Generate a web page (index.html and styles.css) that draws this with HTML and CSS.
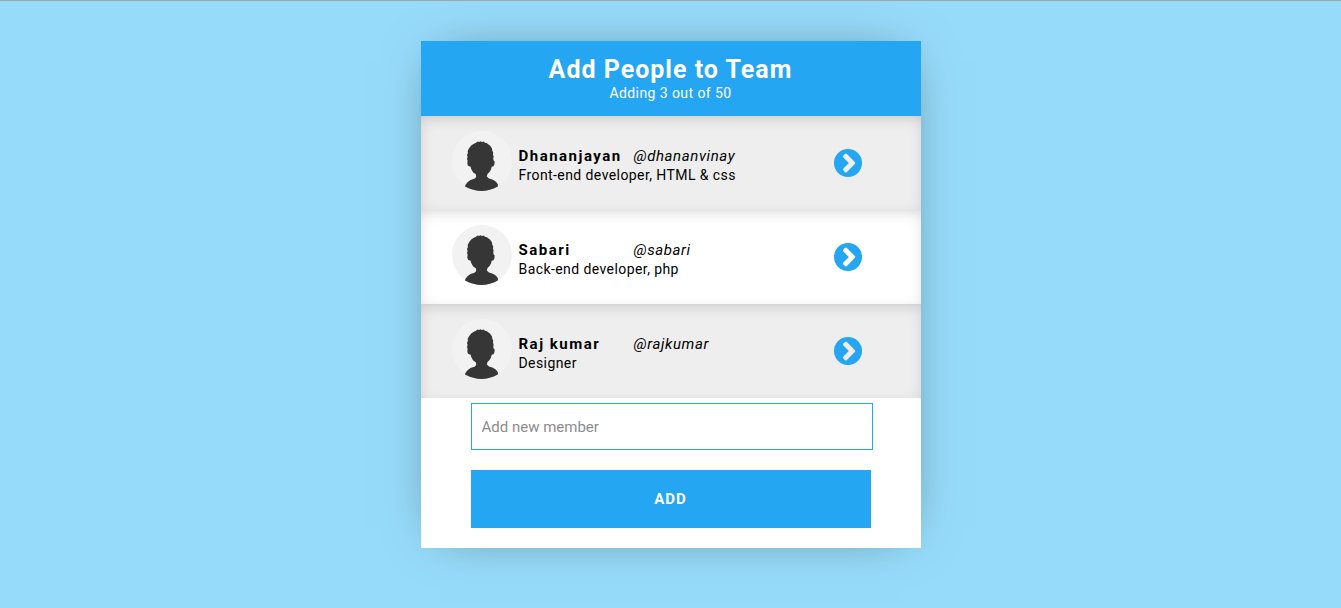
FILE: index.html
```html
<!DOCTYPE html>
<html lang="en">
<head>
<meta charset="utf-8">
<meta name="viewport" content="width=device-width, initial-scale=1">
<title>Add People to Team</title>
<link rel="stylesheet" href="styles.css">
</head>
<body>
<svg class="symbols" aria-hidden="true">
  <symbol id="avatar" viewBox="0 0 60 60">
    <circle cx="30" cy="30" r="30" fill="#f2f2f2"/>
    <path fill="#363636" d="M24 11.800L25.600 10.600 27 11 28.500 10.300 30 11 31.500 10.600 33 11.800 35 12.200 36.500 13.500 38 14.500 39 16 40 17.500 40.200 19.500 41.200 21.500 41 23.500 41.600 25.500 41.300 27.500 41.600 29.600 42.600 30.200 42.500 33 41.500 35.200 39.700 35.800 39 38.500 37.500 41 35.500 43 34.800 45.600 37 47.600 41 48.700 44 50.800 46 53.600 45.800 55.600Q38 60 29.500 60T13 55.600L13.400 54 15.500 51.200 18.500 49 22.500 47.700 24.200 46 24 43.500 21 41.200 19.200 38 18.600 35.800 16 34.800 15.300 32.500 15.600 29.800 15 28 15.600 26 15 24 15.900 22 15.700 20 16.800 17.800 18 16 19.500 14.300 21.500 13z"/>
  </symbol>
  <symbol id="next" viewBox="0 0 28 28">
    <path fill="currentColor" fill-rule="evenodd" d="M14 0a14 14 0 1 1 0 28a14 14 0 0 1 0-28zM12.900 22.900l7.900-7.900a1.400 1.400 0 0 0 0-2l-7.900-7.900a1.400 1.400 0 0 0-2 0l-1.500 1.500a1.400 1.400 0 0 0 0 2l5.400 5.400-5.400 5.400a1.400 1.400 0 0 0 0 2l1.500 1.500a1.400 1.400 0 0 0 2 0z"/>
  </symbol>
</svg>
<main class="card">
  <header class="card-header">
    <h1 class="title">Add People to Team</h1>
    <p class="subtitle">Adding 3 out of 50</p>
  </header>
  <ul class="members">
    <li class="member">
      <svg class="avatar" aria-hidden="true"><use href="#avatar"/></svg>
      <div class="info">
        <div class="names"><strong class="name">Dhananjayan</strong><em class="handle">@dhananvinay</em></div>
        <p class="role">Front-end developer, HTML &amp; css</p>
      </div>
      <button class="next" type="button" aria-label="View Dhananjayan"><svg class="next-icon"><use href="#next"/></svg></button>
    </li>
    <li class="member">
      <svg class="avatar" aria-hidden="true"><use href="#avatar"/></svg>
      <div class="info">
        <div class="names"><strong class="name">Sabari</strong><em class="handle">@sabari</em></div>
        <p class="role">Back-end developer, php</p>
      </div>
      <button class="next" type="button" aria-label="View Sabari"><svg class="next-icon"><use href="#next"/></svg></button>
    </li>
    <li class="member">
      <svg class="avatar" aria-hidden="true"><use href="#avatar"/></svg>
      <div class="info">
        <div class="names"><strong class="name">Raj kumar</strong><em class="handle">@rajkumar</em></div>
        <p class="role">Designer</p>
      </div>
      <button class="next" type="button" aria-label="View Raj kumar"><svg class="next-icon"><use href="#next"/></svg></button>
    </li>
  </ul>
  <form class="add-form">
    <input class="field" type="text" placeholder="Add new member" aria-label="Add new member">
    <button class="add" type="button">ADD</button>
  </form>
</main>
</body>
</html>
```
FILE: styles.css
```css
* { box-sizing: border-box; }

body {
  margin: 0;
  min-height: 100vh;
  padding: 40px 16px;
  border-top: 1px solid #a5a5a5;
  background: #97dbfa;
  color: #000;
  font-family: Roboto, sans-serif;
}

h1, p, ul { margin: 0; padding: 0; }

.symbols { display: none; }

.card {
  max-width: 500px;
  margin: 0 auto;
  background: #fff;
  box-shadow: 0 0 50px -20px rgba(0, 0, 0, 0.5);
}

.card-header {
  padding: 15px 16px 14px;
  background: #24a6f2;
  color: #fff;
  text-align: center;
}

.title {
  font-size: 25px;
  line-height: 28px;
  font-weight: 700;
  letter-spacing: 1px;
}

.subtitle {
  font-size: 14px;
  line-height: 18px;
  letter-spacing: 0.03em;
}

.members { list-style: none; }

.member {
  display: flex;
  align-items: center;
  padding: 15px 59px 19px 31px;
  background: #fff;
  box-shadow: inset 0 4px 16px -4px rgba(0, 0, 0, 0.2);
}

.member:nth-child(odd) { background: #eee; }

.avatar {
  flex: none;
  width: 60px;
  height: 60px;
}

.info {
  flex: 1;
  min-width: 0;
  padding: 8px 0 0 7px;
}

.names {
  display: flex;
  font-size: 15px;
  line-height: 20px;
}

.name {
  width: 115px;
  letter-spacing: 0.1em;
}

.handle { letter-spacing: 0.04em; }

.role {
  font-size: 14px;
  line-height: 18px;
  letter-spacing: 0.03em;
}

.next {
  display: flex;
  margin-top: 3px;
  padding: 0;
  border: 0;
  background: none;
  color: #24a6f2;
  cursor: pointer;
}

.next-icon {
  width: 28px;
  height: 28px;
}

.add-form { padding: 5px 50px 20px; }

.field {
  display: block;
  width: calc(100% + 2px);
  height: 47px;
  padding: 0 10px;
  border: 1px solid #24a6f2;
  background: #fff;
  font: 15px Roboto, sans-serif;
}

.field::placeholder { color: #8c8c8c; }

.add {
  display: block;
  width: 100%;
  height: 58px;
  margin-top: 20px;
  border: 0;
  background: #24a6f2;
  color: #fff;
  font: 700 15px Roboto, sans-serif;
  letter-spacing: 1px;
  cursor: pointer;
}
```
